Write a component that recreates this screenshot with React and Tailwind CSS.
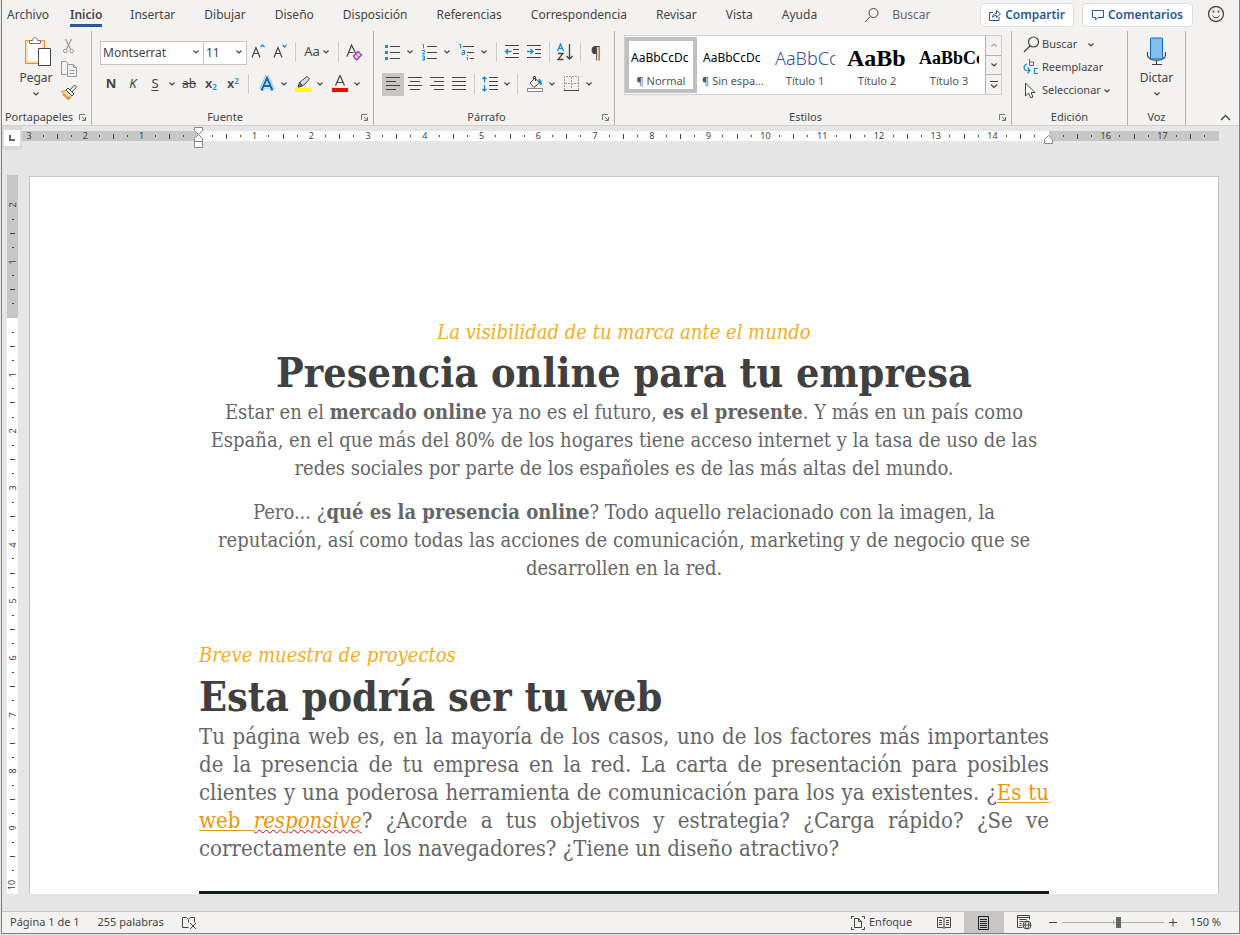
// src/App.jsx
import { useState } from "react";

const TABS = [
  "Insertar",
  "Dibujar",
  "Diseño",
  "Disposición",
  "Referencias",
  "Correspondencia",
  "Revisar",
  "Vista",
  "Ayuda",
];

const STYLES = [
  { name: "¶ Normal", sample: "AaBbCcDc", look: "text-xs text-black" },
  { name: "¶ Sin espa...", sample: "AaBbCcDc", look: "text-xs text-black" },
  { name: "Título 1", sample: "AaBbCc", look: "text-lg font-light text-[#2f5496]" },
  { name: "Título 2", sample: "AaBb", look: "font-['Liberation_Serif',serif] text-2xl font-bold text-black" },
  { name: "Título 3", sample: "AaBbCc", look: "font-['Liberation_Serif',serif] text-lg font-bold text-black" },
];

const BLUE = "#1e8bcd";

// Small building blocks
function Icon({ w = 20, h = 20, children }) {
  return (
    <svg
      width={w}
      height={h}
      viewBox={`0 0 ${w} ${h}`}
      fill="none"
      stroke="#444"
      strokeWidth="1"
      className="shrink-0"
      aria-hidden="true"
    >
      {children}
    </svg>
  );
}

function Chevron({ color = "#444" }) {
  return (
    <Icon w={8} h={6}>
      <path d="M1.500 1.500l2.500 2.500 2.500-2.500" stroke={color} strokeWidth="1.2" />
    </Icon>
  );
}

function Tool({ label, active, children }) {
  return (
    <button
      type="button"
      aria-label={label}
      className={`flex h-[23px] w-[22px] shrink-0 items-center justify-center ${
        active ? "bg-[#c8c6c4]" : ""
      }`}
    >
      {children}
    </button>
  );
}

function More({ label }) {
  return (
    <button type="button" aria-label={label} className="flex h-[23px] w-3 shrink-0 items-center justify-center">
      <Chevron />
    </button>
  );
}

function Divider() {
  return <span className="mx-1 h-5 w-px shrink-0 bg-[#d0cecc]" />;
}

function Launcher({ label }) {
  return (
    <button type="button" aria-label={label} className="shrink-0">
      <Icon w={9} h={9}>
        <path d="M1.5 7V1.5H7M4 4l3 3M7.5 4v3.5H4" stroke="#777" />
      </Icon>
    </button>
  );
}

function Group({ name, launcher, className, children }) {
  return (
    <section aria-label={name} className={`flex shrink-0 flex-col border-r border-[#b3b0ad] ${className}`}>
      <div className="flex-1">{children}</div>
      <div className={`flex h-4 items-center ${launcher ? "pr-1" : ""}`}>
        <span className={`flex-1 whitespace-nowrap text-center text-[11px] leading-4 ${launcher ? "pr-0.5" : ""}`}>
          {name}
        </span>
        {launcher && <Launcher label={`Configuración de ${name}`} />}
      </div>
    </section>
  );
}

// Ribbon tabs
function TabBar() {
  return (
    <header className="flex h-[30px] items-center pl-[5px] pr-[14px] text-xs">
      <nav className="flex shrink-0 items-center">
        <a href="#archivo" className="mr-[21px]">Archivo</a>
        <a href="#inicio" aria-current="page" className="mr-[14px] flex h-[24px] items-center border-b-[3px] border-[#2b579a] pt-[6px] pb-[3px] font-semibold">
          Inicio
        </a>
        {TABS.map((tab) => (
          <a key={tab} href={`#${tab}`} className="pl-[14px] pr-[15px]">
            {tab}
          </a>
        ))}
      </nav>
      <label className="ml-8 flex min-w-0 flex-1 items-center gap-3">
        <Icon w={16} h={16}>
          <circle cx="9.5" cy="6" r="4.5" />
          <path d="M6.2 9.5L1 15" />
        </Icon>
        <input
          type="text"
          placeholder="Buscar"
          aria-label="Buscar"
          className="w-full min-w-0 bg-transparent outline-none placeholder:text-[#666]"
        />
      </label>
      <div className="flex shrink-0 items-center gap-2 font-semibold text-[#2b579a]">
        <button type="button" className="flex h-6 items-center gap-1 rounded-sm border border-[#e1dfdd] bg-white px-2">
          <Icon w={12} h={12}>
            <path d="M4 3.500H.5v8h9.500V8M3.500 8.500c0-3 2-4 4-4V1.500l4 3.500-4 3.500V6.500c-2 0-3 .5-4 2z" stroke="#2b579a" />
          </Icon>
          Compartir
        </button>
        <button type="button" className="flex h-6 items-center gap-1 rounded-sm border border-[#e1dfdd] bg-white px-[9px]">
          <Icon w={12} h={12}>
            <path d="M.5 1.500h11v7H6L3.500 11V8.500h-3z" stroke="#2b579a" />
          </Icon>
          Comentarios
        </button>
        <button type="button" aria-label="Enviar comentarios" className="ml-1.5">
          <Icon w={18} h={18}>
            <circle cx="9" cy="8" r="7.500" strokeWidth="1.300" />
            <path d="M5.500 9.500c1 3 6 3 7 0" />
            <path d="M6.500 4.500v2M11.500 4.500v2" strokeWidth="1.500" />
          </Icon>
        </button>
      </div>
    </header>
  );
}

function Clipboard() {
  return (
    <Group name="Portapapeles" launcher className="w-[90px]">
      <div className="flex items-start pt-1">
        <button type="button" className="ml-3 flex w-11 flex-col items-center pt-px text-xs">
          <Icon w={30} h={34}>
            <path d="M4.500 4.500h19v23h-19z" fill="#fbe3a6" stroke="#ee8e2c" />
            <path d="M7 7h14v18H7z" fill="#fff" stroke="none" />
            <path d="M8.500 7.500v-3h3c0-4 5-4 5 0h3v3z" fill="#fff" stroke="#777" />
            <path d="M17.500 12.500h12v17h-12z" fill="#fff" />
          </Icon>
          <span className="leading-4">Pegar</span>
          <span className="flex h-4 items-center"><Chevron /></span>
        </button>
        <div className="flex flex-col">
          <Tool label="Cortar">
            <Icon w={16} h={18}>
              <g stroke="#9a9a9a">
                <path d="M4.500 1l5 10M10.500 1l-5 10" strokeWidth="1.200" />
                <circle cx="4.300" cy="13" r="1.800" />
                <circle cx="10.700" cy="13" r="1.800" />
              </g>
            </Icon>
          </Tool>
          <Tool label="Copiar">
            <Icon w={18} h={18}>
              <g stroke="#999">
                <path d="M6.500 13.500h-5v-13H6l2.500 2.500" />
                <path d="M7.500 3.500h6l3 3v9h-9zM13.500 3.500v3h3M9.500 9.500h5M9.500 12.500h5" fill="#f3f2f1" />
              </g>
            </Icon>
          </Tool>
          <Tool label="Copiar formato">
            <Icon w={18} h={18}>
              <path d="M1.500 7.500l5-1 5 5-3 4z" fill="#fbd9a6" stroke="#ee8e2c" />
              <path d="M3 10l5.500 5 1.500-2" stroke="#ee8e2c" strokeWidth="2" />
              <path d="M6 6l2-2 6 6-2 2zM10 6l4.500-5 2 2-4.500 5" fill="#fff" />
            </Icon>
          </Tool>
        </div>
      </div>
    </Group>
  );
}

function FontGroup() {
  return (
    <Group name="Fuente" launcher className="w-[282px]">
      <div className="flex flex-col gap-2 pl-2 pt-[9px]">
        <div className="flex h-6 items-center">
          <div className="relative">
            <select aria-label="Fuente" className="h-6 w-[104px] appearance-none border border-[#c8c6c4] bg-white pl-0.5 text-xs outline-none">
              <option>Montserrat</option>
            </select>
            <span className="pointer-events-none absolute inset-y-0 right-1 flex items-center"><Chevron /></span>
          </div>
          <div className="relative -ml-px">
            <select aria-label="Tamaño de fuente" className="h-6 w-11 appearance-none border border-[#c8c6c4] bg-white pl-0.5 text-xs outline-none">
              <option>11</option>
            </select>
            <span className="pointer-events-none absolute inset-y-0 right-1 flex items-center"><Chevron /></span>
          </div>
          <Tool label="Aumentar tamaño">
            <Icon w={16} h={16}>
              <path d="M2 13.500L6 3.500l4 10M3.500 9.500h5" strokeWidth="1.200" />
              <path d="M10.500 3l2-2 2 2" stroke={BLUE} strokeWidth="1.300" />
            </Icon>
          </Tool>
          <Tool label="Disminuir tamaño">
            <Icon w={16} h={16}>
              <path d="M2 13.500L6 3.500l4 10M3.500 9.500h5" strokeWidth="1.200" />
              <path d="M10.500 1l2 2 2-2" stroke={BLUE} strokeWidth="1.300" />
            </Icon>
          </Tool>
          <Divider />
          <button type="button" aria-label="Cambiar mayúsculas" className="flex h-6 w-[34px] shrink-0 items-center justify-center gap-0.5 text-[13px]">
            Aa<Chevron />
          </button>
          <Divider />
          <Tool label="Borrar formato">
            <Icon w={18} h={18}>
              <path d="M2 13.500L6.500 2l4 8M3.500 9.500h5" strokeWidth="1.200" />
              <path d="M8.500 13l4.500-4.500 3.500 3.500-4.500 4.500H11z" fill="#f3d9f5" stroke="#9b3fa5" strokeWidth="1.300" />
              <path d="M10.500 11l3.500 3.500" stroke="#9b3fa5" />
            </Icon>
          </Tool>
        </div>
        <div className="flex h-6 items-center text-[13px]">
          <Tool label="Negrita"><b>N</b></Tool>
          <Tool label="Cursiva"><i>K</i></Tool>
          <Tool label="Subrayado"><u className="underline-offset-2">S</u></Tool>
          <More label="Opciones de subrayado" />
          <Tool label="Tachado"><s className="text-xs">ab</s></Tool>
          <Tool label="Subíndice">
            <span className="font-semibold">x<sub className="text-[8px] text-[#1e8bcd]">2</sub></span>
          </Tool>
          <Tool label="Superíndice">
            <span className="font-semibold">x<sup className="text-[8px] text-[#1e8bcd]">2</sup></span>
          </Tool>
          <Divider />
          <span className="w-[3px]" />
          <Tool label="Efectos de texto">
            <Icon w={18} h={18}>
              <path d="M3.500 15L9 3l5.500 12M5.500 11h7" stroke="#8cc6ee" strokeWidth="5" />
              <path d="M3.500 15.500L9 3l5.500 12.500M5.500 11h7" stroke="#fff" strokeWidth="3" />
              <path d="M3.500 15.500L9 3l5.500 12.500M5.500 11h7" stroke="#1667a8" strokeWidth="2" />
            </Icon>
          </Tool>
          <More label="Opciones de efectos" />
          <span className="w-0.5" />
          <Tool label="Color de resaltado">
            <Icon w={18} h={18}>
              <path d="M5.500 10l1-3.500L13 1.500l2.500 2.500-5.500 6-3 1.500-3 .5z" fill="#ddd" />
              <path d="M5.500 7.500l3 3-4.500 1.500z" fill="#777" />
              <path d="M1 13h16v4H1z" fill="#ff0" stroke="none" />
            </Icon>
          </Tool>
          <More label="Opciones de resaltado" />
          <span className="w-[3px]" />
          <Tool label="Color de fuente">
            <Icon w={18} h={18}>
              <path d="M4.500 10.500L9 .5l4.500 10M6 7.500h6" strokeWidth="1.200" />
              <path d="M1 13h16v4H1z" fill="#f00" stroke="none" />
            </Icon>
          </Tool>
          <More label="Opciones de color" />
        </div>
      </div>
    </Group>
  );
}

function Paragraph() {
  return (
    <Group name="Párrafo" launcher className="w-[241px]">
      <div className="flex flex-col gap-2 pl-2 pt-[9px]">
        <div className="flex h-6 items-center">
          <Tool label="Viñetas">
            <Icon w={18} h={18}>
              <path d="M1 2h3v3H1zM1 8h3v3H1zM1 14h3v3H1z" fill={BLUE} stroke="none" />
              <path d="M6 3.500h10M6 9.500h10M6 15.500h10" />
            </Icon>
          </Tool>
          <More label="Opciones de viñetas" />
          <span className="w-[3px]" />
          <Tool label="Numeración">
            <Icon w={18} h={18}>
              <path d="M1.500 1.500h1v4M1 7.500h2.500v1.500L1.500 11H4M1 13h2.500v2H2h1.500v2H1" stroke={BLUE} />
              <path d="M6 3.500h10M6 9.500h10M6 15.500h10" />
            </Icon>
          </Tool>
          <More label="Opciones de numeración" />
          <span className="w-[3px]" />
          <Tool label="Lista multinivel">
            <Icon w={18} h={18}>
              <path d="M1 1.500h1.500v4M4 7.500h2.500v4H4v-2h2.500M9.500 12v1M9.500 14v3" stroke={BLUE} />
              <path d="M5 3.500h11M9 9.500h7M12 15.500h4" />
            </Icon>
          </Tool>
          <More label="Opciones de lista multinivel" />
          <span className="w-0.5" />
          <Divider />
          <Tool label="Disminuir sangría">
            <Icon w={16} h={16}>
              <path d="M1 1.500h14M9 5.500h6M9 9.500h6M1 13.500h14" />
              <path d="M7.500 7.500h-6M4 5L1.500 7.500 4 10" stroke={BLUE} strokeWidth="1.300" />
            </Icon>
          </Tool>
          <Tool label="Aumentar sangría">
            <Icon w={16} h={16}>
              <path d="M1 1.500h14M9 5.500h6M9 9.500h6M1 13.500h14" />
              <path d="M1 7.500h6M4.500 5L7 7.500 4.500 10" stroke={BLUE} strokeWidth="1.300" />
            </Icon>
          </Tool>
          <Divider />
          <Tool label="Ordenar">
            <Icon w={18} h={18}>
              <path d="M1.500 8l3-7 3 7M2.500 5.500h4" stroke={BLUE} strokeWidth="1.300" />
              <path d="M2 10.500h5l-5 6h5.500M13.500 1v15M10.500 13l3 3 3-3" strokeWidth="1.300" />
            </Icon>
          </Tool>
          <Divider />
          <Tool label="Mostrar todo"><span className="text-base">¶</span></Tool>
        </div>
        <div className="flex h-6 items-center">
          <Tool label="Alinear a la izquierda" active>
            <Icon w={16} h={16}><path d="M1 1.500h14M1 5.500h10M1 9.500h14M1 13.500h10" /></Icon>
          </Tool>
          <Tool label="Centrar">
            <Icon w={16} h={16}><path d="M1 1.500h14M3 5.500h10M1 9.500h14M3 13.500h10" /></Icon>
          </Tool>
          <Tool label="Alinear a la derecha">
            <Icon w={16} h={16}><path d="M1 1.500h14M5 5.500h10M1 9.500h14M5 13.500h10" /></Icon>
          </Tool>
          <Tool label="Justificar">
            <Icon w={16} h={16}><path d="M1 1.500h14M1 5.500h14M1 9.500h14M1 13.500h14" /></Icon>
          </Tool>
          <Divider />
          <Tool label="Espaciado">
            <Icon w={18} h={18}>
              <path d="M3.500 2v5.500M1.500 4l2-2 2 2M3.500 10v6M1.500 14l2 2 2-2" stroke={BLUE} strokeWidth="1.300" />
              <path d="M8 2.500h9M8 6.500h9M8 10.500h9M8 14.500h9" />
            </Icon>
          </Tool>
          <More label="Opciones de espaciado" />
          <Divider />
          <span className="w-0.5" />
          <Tool label="Sombreado">
            <Icon w={18} h={18}>
              <path d="M4 8l5-5 4.500 5-5.500 4.500zM7.500 5V1.500h2V6" />
              <path d="M13 4c2 1 3 3 2 6l-2-3z" fill={BLUE} stroke={BLUE} />
              <path d="M1.500 13.500h15v3h-15z" fill="#fff" stroke="#888" />
            </Icon>
          </Tool>
          <More label="Opciones de sombreado" />
          <span className="w-[3px]" />
          <Tool label="Bordes">
            <Icon w={18} h={18}>
              <path d="M1.500 15V1.500h14V15M8.500 2v12M2 8.500h13" stroke="#999" strokeDasharray="2 1" />
              <path d="M1 15.500h15" />
            </Icon>
          </Tool>
          <More label="Opciones de bordes" />
        </div>
      </div>
    </Group>
  );
}

function StylesGallery() {
  const [current, setCurrent] = useState("¶ Normal");

  return (
    <Group name="Estilos" launcher className="w-[397px]">
      <div className="px-[9px] pt-1">
        <div className="flex h-[60px] border border-[#d0cecc] bg-white">
          {STYLES.map(({ name, sample, look }) => (
            <button
              key={name}
              type="button"
              onClick={() => setCurrent(name)}
              className={`mt-px flex h-14 w-[72px] shrink-0 flex-col items-center border-4 ${
                name === current ? "border-[#c0c0c0]" : "border-transparent"
              }`}
            >
              <span className={`mt-0.5 flex h-[30px] w-[60px] items-center overflow-hidden ${look}`}>{sample}</span>
              <span className="whitespace-nowrap text-[11px] leading-4 text-[#555]">{name}</span>
            </button>
          ))}
          <div className="flex flex-1 flex-col divide-y divide-[#b3b0ad] border-l border-[#b3b0ad] bg-[#f3f2f1]">
            <button type="button" aria-label="Fila anterior" className="flex flex-1 items-center justify-center">
              <span className="rotate-180"><Chevron color="#aaa" /></span>
            </button>
            <button type="button" aria-label="Fila siguiente" className="flex flex-1 items-center justify-center">
              <Chevron />
            </button>
            <button type="button" aria-label="Más estilos" className="flex flex-1 items-center justify-center">
              <Icon w={8} h={9}>
                <path d="M0 1.500h8M1 4.500l3 3 3-3" strokeWidth="1.200" />
              </Icon>
            </button>
          </div>
        </div>
      </div>
    </Group>
  );
}

function Editing() {
  return (
    <Group name="Edición" className="w-[116px]">
      <div className="flex flex-col items-start pl-[11px] pt-[2px] text-[11px]">
        <button type="button" className="flex h-[23px] items-center gap-0.5">
          <Icon w={17} h={17}>
            <circle cx="10.500" cy="6" r="5" strokeWidth="1.200" />
            <path d="M7 10l-6 6" strokeWidth="1.200" />
          </Icon>
          Buscar
          <span className="ml-2"><Chevron /></span>
        </button>
        <button type="button" className="flex h-[23px] items-center gap-0.5">
          <Icon w={17} h={17}>
            <path d="M6.500 0v6.500h4V3h-4" stroke="#9b3fa5" />
            <path d="M15 9.500h-3.500v5H15M4 5c-4 1-3.500 6-.5 6.500h3M4.500 8.500l2.500 3-2.500 3" stroke={BLUE} strokeWidth="1.200" />
          </Icon>
          Reemplazar
        </button>
        <button type="button" className="flex h-[23px] items-center gap-0.5">
          <Icon w={17} h={17}>
            <path d="M2.500 1v13l3-3 2.500 5 2-1-2-4.500h4z" fill="#fff" />
          </Icon>
          Seleccionar
          <Chevron />
        </button>
      </div>
    </Group>
  );
}

function Voice() {
  return (
    <Group name="Voz" className="w-[58px]">
      <button type="button" className="flex w-full flex-col items-center pt-[5px] text-xs">
        <Icon w={22} h={34}>
          <path d="M1.500 16v3c0 7 18 7 18 0v-3M10.500 24v5M6 28.500h10" strokeWidth="1.200" />
          <rect x="4.500" y="2" width="12" height="21" rx="1" fill="#83beec" stroke="#0f6cbd" />
        </Icon>
        <span className="leading-4">Dictar</span>
        <span className="flex h-4 items-center"><Chevron /></span>
      </button>
    </Group>
  );
}

function Ribbon() {
  return (
    <div className="flex h-24 border-b border-[#d2d0ce] pt-px">
      <Clipboard />
      <FontGroup />
      <Paragraph />
      <StylesGallery />
      <Editing />
      <Voice />
      <button type="button" aria-label="Contraer la cinta" className="ml-auto mr-2 self-end pb-1">
        <Icon w={11} h={7}>
          <path d="M1 6l4.500-4.500L10 6" strokeWidth="1.300" />
        </Icon>
      </button>
    </div>
  );
}

// Ruler marks: a number on each centimetre, a line at the half, dots at the quarters
function Mark({ step, vertical }) {
  if (step % 4 === 0) {
    return <span className={vertical ? "-rotate-90" : ""}>{Math.abs(step / 4)}</span>;
  }
  if (step % 2 === 0) {
    return <span className={vertical ? "h-px w-[5px] bg-[#444]" : "h-[5px] w-px bg-[#444]"} />;
  }
  return <span className={vertical ? "h-px w-0.5 bg-[#444]" : "h-0.5 w-px bg-[#444]"} />;
}

function Marks({ from, to, vertical }) {
  const steps = Array.from({ length: to - from + 1 }, (_, i) => from + i);
  return steps.map((step) => (
    <span
      key={step}
      className={`flex items-center justify-center ${vertical ? "min-h-0 flex-1" : "min-w-0 flex-1"}`}
    >
      <Mark step={step} vertical={vertical} />
    </span>
  ));
}

function HorizontalRuler() {
  return (
    <div className="flex h-6 shrink-0 items-start pr-5 text-[9px] leading-[10px]">
      <div className="flex h-6 w-5 items-center justify-center bg-[#dadada]">
        <button type="button" aria-label="Tabulación izquierda" className="flex h-4 w-4 items-center justify-center bg-white">
          <Icon w={8} h={8}>
            <path d="M2 1v5h5" stroke="#666" strokeWidth="2" />
          </Icon>
        </button>
      </div>
      <div className="mt-[5px] flex h-[10px] w-44 bg-[#c6c6c6] pr-[7px]">
        <Marks from={-12} to={-1} />
      </div>
      <div className="relative mt-[5px] flex h-[10px] flex-1 bg-white px-[7px]">
        <Marks from={1} to={59} />
        <span className="absolute -left-1 -top-1">
          <Icon w={9} h={22}>
            <path d="M.5.500h8v3l-4 4 4 4v3h-8v-3l4-4-4-4zM.5 14.500h8v6h-8z" fill="#fff" stroke="#888" />
          </Icon>
        </span>
        <span className="absolute -right-1 top-1">
          <Icon w={9} h={9}>
            <path d="M.5 8.500v-4l4-4 4 4v4z" fill="#fff" stroke="#888" />
          </Icon>
        </span>
      </div>
      <div className="mt-[5px] flex h-[10px] w-[170px] bg-[#c6c6c6] px-[7px]">
        <Marks from={61} to={71} />
      </div>
    </div>
  );
}

function VerticalRuler() {
  return (
    <div className="ml-[5px] flex w-[11px] shrink-0 flex-col text-[9px] leading-[10px]">
      <div className="flex h-[143px] flex-col bg-[#c6c6c6] pb-[7px] pt-[23px]">
        <Marks from={-8} to={-1} vertical />
      </div>
      <div className="flex flex-1 flex-col bg-white pb-0.5 pt-[7px]">
        <Marks from={1} to={40} vertical />
      </div>
    </div>
  );
}

function Document() {
  return (
    <article className="ml-[11px] mr-5 mt-px min-w-0 flex-1 overflow-hidden border border-b-0 border-[#c6c6c6] bg-white px-[169px] pt-[141px] font-['DejaVu_Serif_Condensed','DejaVu_Serif',serif] text-xl leading-7 text-[#666]">
      <section className="text-center">
        <p className="italic text-[#f3ad20]">La visibilidad de tu marca ante el mundo</p>
        <h1 className="pt-[3px] pb-px text-[41px] font-bold leading-[48px] text-[#404040]">
          Presencia online para tu empresa
        </h1>
        <p>
          Estar en el <b>mercado online</b> ya no es el futuro, <b>es el presente</b>. Y más en un país como
          España, en el que más del 80% de los hogares tiene acceso internet y la tasa de uso de las redes
          sociales por parte de los españoles es de las más altas del mundo.
        </p>
        <p className="mt-4">
          Pero... ¿<b>qué es la presencia online</b>? Todo aquello relacionado con la imagen, la reputación, así
          como todas las acciones de comunicación, marketing y de negocio que se desarrollen en la red.
        </p>
      </section>
      <section className="mt-[59px]">
        <p className="italic text-[#f3ad20]">Breve muestra de proyectos</p>
        <h2 className="pt-1 pb-0.5 text-[41px] font-bold leading-[48px] text-[#404040]">Esta podría ser tu web</h2>
        <p className="text-justify text-[22px] leading-7 [text-align-last:justify]">
          Tu página web es, en la mayoría de los casos, uno de los factores más importantes
          <br />
          de la presencia de tu empresa en la red. La carta de presentación para posibles
          <br />
          clientes y una poderosa herramienta de comunicación para los ya existentes. ¿
          <a href="#responsive" className="text-[#e8960c]">
            <span className="underline decoration-1 underline-offset-2">
              Es tu
              <br />
              web{" "}
            </span>
            <em className="underline decoration-red-600 decoration-wavy decoration-1">responsive</em>
          </a>
          ? ¿Acorde a tus objetivos y estrategia? ¿Carga rápido? ¿Se ve
          <span className="block [text-align-last:left]">
            correctamente en los navegadores? ¿Tiene un diseño atractivo?
          </span>
        </p>
        <div className="mt-7 h-10 bg-[#161c24]" />
      </section>
    </article>
  );
}

function StatusBar() {
  const [zoom, setZoom] = useState(56);

  return (
    <footer className="flex h-[22px] shrink-0 items-center border-t border-[#c6c6c6] bg-[#f3f2f1] pl-2 pr-[18px] text-[11px]">
      <span>Página 1 de 1</span>
      <span className="ml-[18px]">255 palabras</span>
      <button type="button" aria-label="Revisión" className="ml-[18px]">
        <Icon w={15} h={15}>
          <path d="M6.500 12.500H.5v-10h4l2 2 2-2h4v5M6.500 4.500v3M8 8l6 6M14 8l-6 6" />
        </Icon>
      </button>
      <div className="ml-auto flex h-full items-center">
        <button type="button" className="mr-3 flex items-center gap-1">
          <Icon w={14} h={14}>
            <path d="M3 .5H.5V3M11 .5h2.500V3M3 13.500H.5V11M11 13.500h2.500V11M3.500 2.500h4l3 3v6h-7zM7.500 2.500v3h3" />
          </Icon>
          Enfoque
        </button>
        <button type="button" aria-label="Modo de lectura" className="flex h-full w-10 items-center justify-center">
          <Icon w={14} h={14}>
            <path d="M.5 1.500H6l1 1 1-1h5.500v10H8l-1 1-1-1H.5zM7 2.500v10M2 4.500h3M2 6.500h3M2 8.500h3M9 4.500h3M9 6.500h3M9 8.500h3" />
          </Icon>
        </button>
        <button type="button" aria-label="Diseño de impresión" className="flex h-full w-10 items-center justify-center bg-[#c8c6c4]">
          <Icon w={12} h={14}>
            <path d="M.5.500h10v13H.5zM2 3.500h7M2 5.500h7M2 7.500h7M2 9.500h7M2 11.500h7" stroke="#222" />
          </Icon>
        </button>
        <button type="button" aria-label="Diseño web" className="flex h-full w-10 items-center justify-center">
          <Icon w={15} h={15}>
            <path d="M5.500 12.500h-5v-12h12v4M.5 2.500h12M2.500 4.500h7M2.500 6.500h4M2.500 8.500h2M2.500 10.500h2" />
            <circle cx="10" cy="10" r="4" />
            <path d="M6 10h8M10 6c-2.500 2-2.500 6 0 8M10 6c2.500 2 2.500 6 0 8" />
          </Icon>
        </button>
        <button type="button" aria-label="Alejar" className="ml-1">
          <Icon w={10} h={10}><path d="M1 4.500h8" /></Icon>
        </button>
        <input
          type="range"
          aria-label="Zoom"
          value={zoom}
          onChange={(e) => setZoom(Number(e.target.value))}
          className="mx-1 h-3 w-[102px] appearance-none bg-[linear-gradient(#b0b0b0,#b0b0b0),linear-gradient(#b0b0b0,#b0b0b0)] bg-[length:100%_1px,1px_5px] bg-center bg-no-repeat [&::-webkit-slider-thumb]:h-[11px] [&::-webkit-slider-thumb]:w-[5px] [&::-webkit-slider-thumb]:appearance-none [&::-webkit-slider-thumb]:bg-[#666]"
        />
        <button type="button" aria-label="Acercar">
          <Icon w={10} h={10}><path d="M1 4.500h8M5 .5v8" /></Icon>
        </button>
        <span className="ml-3">150 %</span>
      </div>
    </footer>
  );
}

export default function App() {
  return (
    <div className="h-screen overflow-hidden bg-[#e6e6e6] pb-px pl-px font-['Noto_Sans',sans-serif] text-[#444]">
      <div className="flex h-full flex-col border border-t-0 border-[#808080]">
        <div className="shrink-0 bg-[#f3f2f1]">
          <TabBar />
          <Ribbon />
        </div>
        <HorizontalRuler />
        <main className="mb-[17px] mt-[25px] flex min-h-0 flex-1">
          <VerticalRuler />
          <Document />
        </main>
        <StatusBar />
      </div>
    </div>
  );
}
